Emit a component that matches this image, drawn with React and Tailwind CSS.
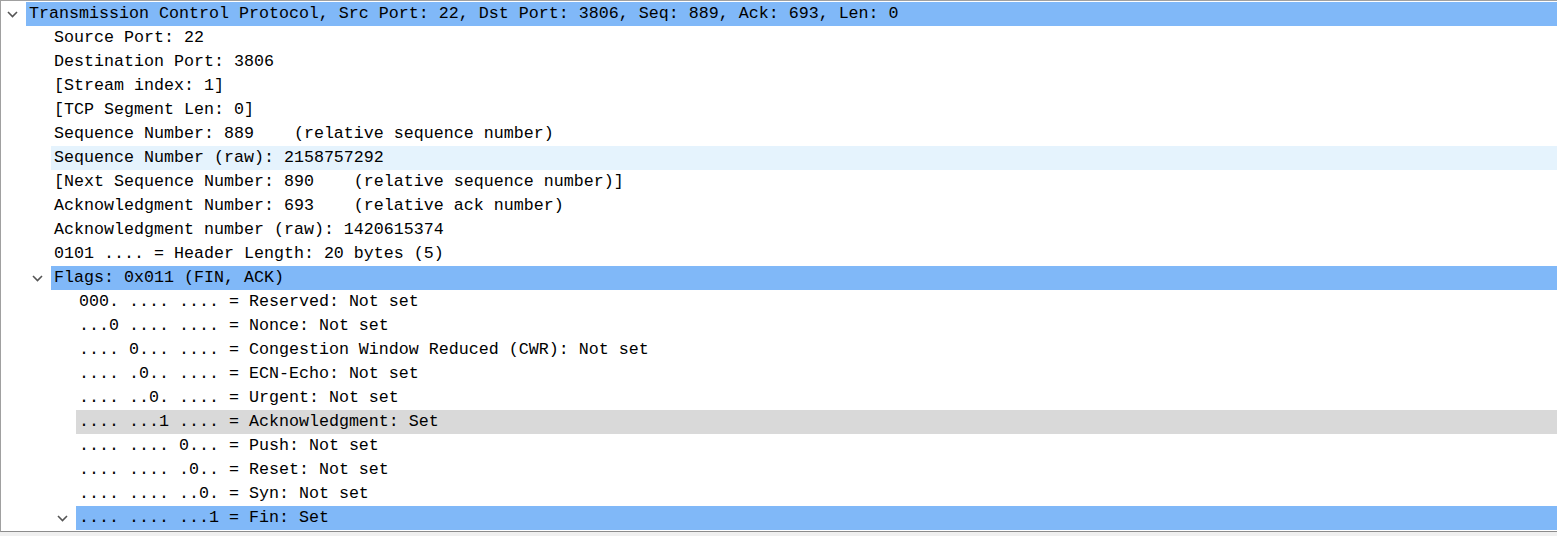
import React from 'react';

const rows = [
    { level: 0, text: 'Transmission Control Protocol, Src Port: 22, Dst Port: 3806, Seq: 889, Ack: 693, Len: 0', open: true, tone: 'selected' },
    { level: 1, text: 'Source Port: 22' },
    { level: 1, text: 'Destination Port: 3806' },
    { level: 1, text: '[Stream index: 1]' },
    { level: 1, text: '[TCP Segment Len: 0]' },
    { level: 1, text: 'Sequence Number: 889    (relative sequence number)' },
    { level: 1, text: 'Sequence Number (raw): 2158757292', tone: 'hover' },
    { level: 1, text: '[Next Sequence Number: 890    (relative sequence number)]' },
    { level: 1, text: 'Acknowledgment Number: 693    (relative ack number)' },
    { level: 1, text: 'Acknowledgment number (raw): 1420615374' },
    { level: 1, text: '0101 .... = Header Length: 20 bytes (5)' },
    { level: 1, text: 'Flags: 0x011 (FIN, ACK)', open: true, tone: 'selected' },
    { level: 2, text: '000. .... .... = Reserved: Not set' },
    { level: 2, text: '...0 .... .... = Nonce: Not set' },
    { level: 2, text: '.... 0... .... = Congestion Window Reduced (CWR): Not set' },
    { level: 2, text: '.... .0.. .... = ECN-Echo: Not set' },
    { level: 2, text: '.... ..0. .... = Urgent: Not set' },
    { level: 2, text: '.... ...1 .... = Acknowledgment: Set', tone: 'gray' },
    { level: 2, text: '.... .... 0... = Push: Not set' },
    { level: 2, text: '.... .... .0.. = Reset: Not set' },
    { level: 2, text: '.... .... ..0. = Syn: Not set' },
    { level: 2, text: '.... .... ...1 = Fin: Set', open: true, tone: 'selected' },
];

// indent before the highlighted cell, per tree level
const indent = ['w-[25px]', 'w-[50px]', 'w-[75px]'];

const toneClass = {
    selected: 'bg-[#80b8f8]',
    hover: 'bg-[#e5f3fd]',
    gray: 'bg-[#d9d9d9]',
};

const Chevron = () => (
    <svg width="11" height="7" viewBox="0 0 11 7" className="mr-[8px]">
        <path d="M1 1 L5.5 5.5 L10 1" fill="none" stroke="#555" strokeWidth="1.6" />
    </svg>
);

const TreeRow = ({ row }) => (
    <div className="flex h-6 items-stretch">
        <div className={`${indent[row.level]} shrink-0 flex items-center justify-end`}>
            {row.open && <Chevron />}
        </div>
        <div className={`flex-1 pl-[3px] leading-6 whitespace-pre text-black ${toneClass[row.tone] || ''}`}>
            {row.text}
        </div>
    </div>
);

export default function App() {
    return (
        <div className="w-[1557px] h-[536px] bg-[#f0f0f0] overflow-hidden">
            <div
                className="h-[532px] bg-white border-l border-t border-b border-[#a0a0a0] border-b-[#8c8c8c] pt-px"
                style={{ fontFamily: '"Liberation Mono", "DejaVu Sans Mono", monospace', fontSize: '16.67px' }}
            >
                {rows.map((row, i) => (
                    <TreeRow key={i} row={row} />
                ))}
            </div>
        </div>
    );
}
